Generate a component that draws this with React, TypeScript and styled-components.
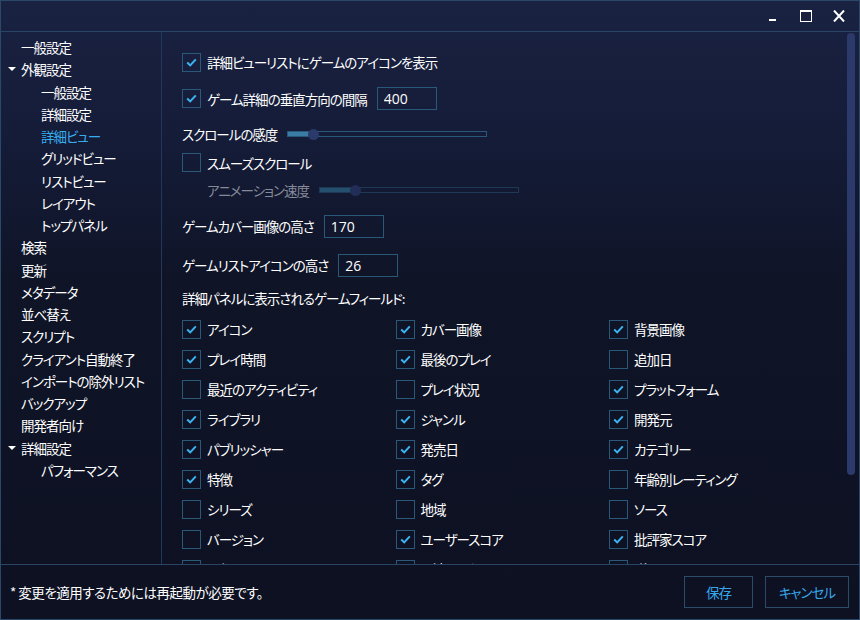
import React from "react";
import styled, { createGlobalStyle } from "styled-components";

const GlobalStyle = createGlobalStyle`
  html, body {
    margin: 0;
    padding: 0;
    background: #0d1122;
  }
  * {
    box-sizing: border-box;
  }
  body {
    font-family: "Noto Sans CJK JP", "Noto Sans", sans-serif;
    font-feature-settings: "palt";
    color: #ffffff;
  }
`;

const Window = styled.div`
  width: 860px;
  height: 620px;
  display: flex;
  flex-direction: column;
  border: 1px solid #2b4868;
  background: linear-gradient(180deg, #1a2242 0%, #151c38 22%, #0f1427 45%, #0d1122 100%);
  overflow: hidden;
  font-size: 13.5px;
  letter-spacing: -1px;
`;

const TitleBar = styled.div`
  height: 31px;
  flex: none;
  display: flex;
  justify-content: flex-end;
  align-items: center;
  padding-right: 4px;
  border-bottom: 1px solid #2a4464;
`;

const TitleButton = styled.div`
  width: 33px;
  height: 30px;
  display: flex;
  align-items: center;
  justify-content: center;
`;

const Body = styled.div`
  flex: 1;
  min-height: 0;
  display: flex;
`;

const Sidebar = styled.div`
  width: 161px;
  flex: none;
  border-right: 1px solid #22385a;
  padding-top: 4px;
`;

const NavItem = styled.div<{ $level: number; $active?: boolean }>`
  height: 22.26px;
  display: flex;
  align-items: center;
  padding-left: ${(p) => 6 + p.$level * 20}px;
  color: ${(p) => (p.$active ? "#35aef0" : "#ffffff")};
  white-space: nowrap;
`;

const Arrow = styled.span<{ $show: boolean }>`
  width: 14px;
  flex: none;
  display: flex;
  align-items: center;
  padding-left: 1px;
  &::before {
    content: "";
    display: ${(p) => (p.$show ? "block" : "none")};
    border-left: 4px solid transparent;
    border-right: 4px solid transparent;
    border-top: 4px solid #ffffff;
  }
`;

const Content = styled.div`
  flex: 1;
  min-width: 0;
  overflow: hidden;
  padding: 12px 0 28px 20px;
`;

const ScrollTrack = styled.div`
  width: 12px;
  flex: none;
  padding-top: 1px;
`;

const ScrollThumb = styled.div`
  width: 8px;
  border-radius: 4px;
  background: #2b3a6a;
`;

const Row = styled.div<{ $h: number; $indent?: number }>`
  height: ${(p) => p.$h}px;
  display: flex;
  align-items: center;
  gap: 6px;
  padding-left: ${(p) => p.$indent ?? 0}px;
  white-space: nowrap;
`;

const Label = styled.span<{ $dim?: boolean }>`
  color: ${(p) => (p.$dim ? "#858a99" : "#ffffff")};
  margin-right: 4px;
`;

const Box = styled.span`
  width: 19px;
  height: 19px;
  flex: none;
  border: 1px solid #2a5878;
  display: flex;
  align-items: center;
  justify-content: center;
`;

const NumberInput = styled.input`
  width: 60px;
  height: 23px;
  border: 1px solid #2a5878;
  background: transparent;
  color: #ffffff;
  font-family: "Open Sans", "Noto Sans", sans-serif;
  font-size: 14px;
  letter-spacing: 0;
  padding: 0 6px;
  outline: none;
`;

const Track = styled.div<{ $dim?: boolean }>`
  position: relative;
  width: 200px;
  height: 6px;
  border: 1px solid ${(p) => (p.$dim ? "#1c3a55" : "#2a5878")};
`;

const Fill = styled.div<{ $dim?: boolean }>`
  height: 100%;
  background: ${(p) => (p.$dim ? "#24506e" : "#3b7ca4")};
`;

const Thumb = styled.div<{ $dim?: boolean }>`
  position: absolute;
  top: 50%;
  width: 11px;
  height: 11px;
  margin: -5.5px 0 0 -5.5px;
  border-radius: 50%;
  background: ${(p) => (p.$dim ? "#222e58" : "#2b3a6a")};
`;

const FieldGrid = styled.div`
  margin-top: 2px;
  display: grid;
  grid-template-columns: 213.5px 213.5px 213.5px;
  grid-auto-rows: 30px;
`;

const Field = styled.div`
  display: flex;
  align-items: center;
  gap: 6px;
  white-space: nowrap;
`;

const Footer = styled.div`
  height: 55px;
  flex: none;
  border-top: 1px solid #2a4464;
  display: flex;
  align-items: center;
  padding: 0 10px 0 9px;
`;

const Note = styled.span`
  flex: 1;
  color: #ffffff;
  letter-spacing: -0.5px;
`;

const Button = styled.button<{ $w: number }>`
  width: ${(p) => p.$w}px;
  height: 32px;
  margin-left: 12px;
  border: 1px solid #2c4b68;
  background: transparent;
  color: #37a7ea;
  font: inherit;
  letter-spacing: -1px;
  padding: 0;
`;

const CheckMark = () => (
  <svg width="11" height="9" viewBox="0 0 11 9">
    <path d="M1.2 4.6 L4.2 7.4 L9.8 1.4" fill="none" stroke="#3db4f2" strokeWidth="2" />
  </svg>
);

const Checkbox = ({ checked }: { checked: boolean }) => <Box>{checked && <CheckMark />}</Box>;

const Slider = ({ value, dim }: { value: number; dim?: boolean }) => (
  <Track $dim={dim}>
    <Fill $dim={dim} style={{ width: `${value}%` }} />
    <Thumb $dim={dim} style={{ left: `${value}%` }} />
  </Track>
);

const navItems: { label: string; level: number; expanded?: boolean; active?: boolean }[] = [
  { label: "一般設定", level: 0 },
  { label: "外観設定", level: 0, expanded: true },
  { label: "一般設定", level: 1 },
  { label: "詳細設定", level: 1 },
  { label: "詳細ビュー", level: 1, active: true },
  { label: "グリッドビュー", level: 1 },
  { label: "リストビュー", level: 1 },
  { label: "レイアウト", level: 1 },
  { label: "トップパネル", level: 1 },
  { label: "検索", level: 0 },
  { label: "更新", level: 0 },
  { label: "メタデータ", level: 0 },
  { label: "並べ替え", level: 0 },
  { label: "スクリプト", level: 0 },
  { label: "クライアント自動終了", level: 0 },
  { label: "インポートの除外リスト", level: 0 },
  { label: "バックアップ", level: 0 },
  { label: "開発者向け", level: 0 },
  { label: "詳細設定", level: 0, expanded: true },
  { label: "パフォーマンス", level: 1 },
];

const fields: [string, boolean][] = [
  ["アイコン", true], ["カバー画像", true], ["背景画像", true],
  ["プレイ時間", true], ["最後のプレイ", true], ["追加日", false],
  ["最近のアクティビティ", false], ["プレイ状況", false], ["プラットフォーム", true],
  ["ライブラリ", true], ["ジャンル", true], ["開発元", true],
  ["パブリッシャー", true], ["発売日", true], ["カテゴリー", true],
  ["特徴", true], ["タグ", true], ["年齢別レーティング", false],
  ["シリーズ", false], ["地域", false], ["ソース", false],
  ["バージョン", false], ["ユーザースコア", true], ["批評家スコア", true],
  ["評価", false], ["関連リンク", false], ["説明", true],
];

export default function App() {
  return (
    <>
      <GlobalStyle />
      <Window>
        <TitleBar>
          <TitleButton>
            <svg width="12" height="12" viewBox="0 0 12 12">
              <rect x="2" y="9" width="7" height="2" fill="#fff" />
            </svg>
          </TitleButton>
          <TitleButton>
            <svg width="12" height="12" viewBox="0 0 12 12">
              <rect x="0.5" y="0.5" width="11" height="11" fill="none" stroke="#fff" />
              <rect x="0" y="0" width="12" height="2" fill="#fff" />
            </svg>
          </TitleButton>
          <TitleButton>
            <svg width="12" height="12" viewBox="0 0 12 12">
              <path d="M1 0.5 L11 11.5 M11 0.5 L1 11.5" stroke="#fff" strokeWidth="2" />
            </svg>
          </TitleButton>
        </TitleBar>
        <Body>
          <Sidebar>
            {navItems.map((n, i) => (
              <NavItem key={i} $level={n.level} $active={n.active}>
                <Arrow $show={!!n.expanded} />
                {n.label}
              </NavItem>
            ))}
          </Sidebar>
          <Content>
            <Row $h={36}>
              <Checkbox checked />
              <Label>詳細ビューリストにゲームのアイコンを表示</Label>
            </Row>
            <Row $h={37}>
              <Checkbox checked />
              <Label>ゲーム詳細の垂直方向の間隔</Label>
              <NumberInput defaultValue="400" />
            </Row>
            <Row $h={34}>
              <Label>スクロールの感度</Label>
              <Slider value={12.5} />
            </Row>
            <Row $h={23}>
              <Checkbox checked={false} />
              <Label>スムーズスクロール</Label>
            </Row>
            <Row $h={32} $indent={25}>
              <Label $dim>アニメーション速度</Label>
              <Slider value={18} dim />
            </Row>
            <Row $h={40}>
              <Label>ゲームカバー画像の高さ</Label>
              <NumberInput defaultValue="170" />
            </Row>
            <Row $h={38}>
              <Label>ゲームリストアイコンの高さ</Label>
              <NumberInput defaultValue="26" />
            </Row>
            <Row $h={28}>
              <Label>詳細パネルに表示されるゲームフィールド:</Label>
            </Row>
            <FieldGrid>
              {fields.map(([label, checked], i) => (
                <Field key={i}>
                  <Checkbox checked={checked} />
                  <Label>{label}</Label>
                </Field>
              ))}
            </FieldGrid>
          </Content>
          <ScrollTrack>
            <ScrollThumb style={{ height: 442 }} />
          </ScrollTrack>
        </Body>
        <Footer>
          <Note>* 変更を適用するためには再起動が必要です。</Note>
          <Button $w={69}>保存</Button>
          <Button $w={84}>キャンセル</Button>
        </Footer>
      </Window>
    </>
  );
}
